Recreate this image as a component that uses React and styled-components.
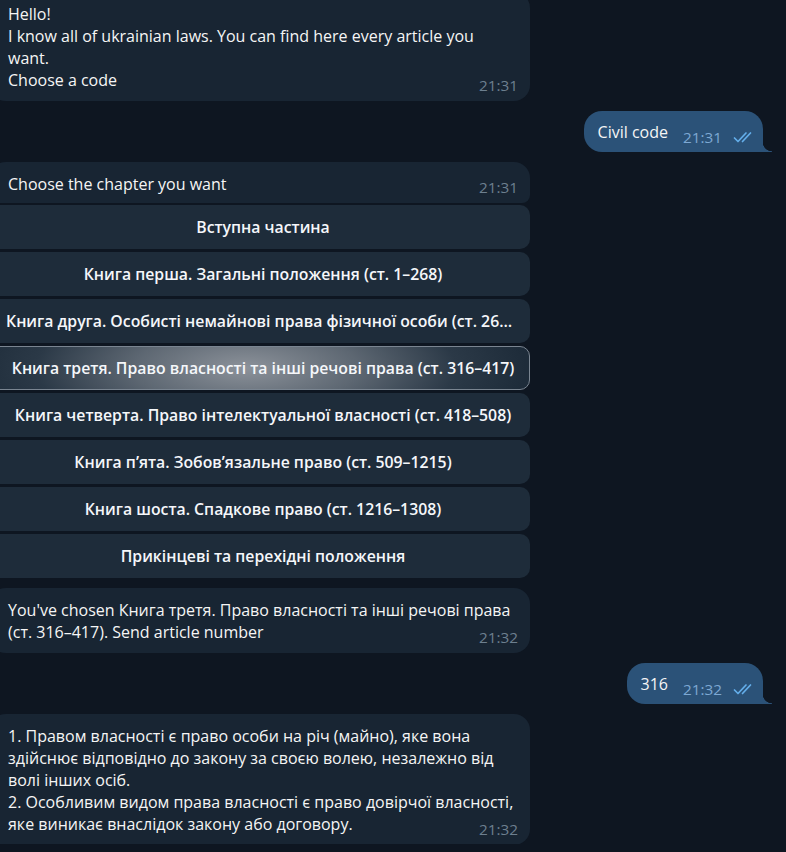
import React from "react";
import styled, { createGlobalStyle, css } from "styled-components";

const GlobalStyle = createGlobalStyle`
  html, body {
    margin: 0;
    padding: 0;
    background: #0e1621;
    overflow: hidden;
  }
  body {
    font-family: "Open Sans", "Noto Sans", sans-serif;
    -webkit-font-smoothing: antialiased;
  }
`;

const Chat = styled.div`
  width: 786px;
  height: 852px;
  display: flex;
  flex-direction: column;
  gap: 10px;
  margin-top: -8px;
  box-sizing: border-box;
`;

const InRow = styled.div`
  display: flex;
  flex-direction: column;
  width: 540px;
  margin-left: -10px;
`;

const OutRow = styled.div`
  display: flex;
  justify-content: flex-end;
  padding-right: 23px;
`;

const Bubble = styled.div`
  position: relative;
  box-sizing: border-box;
  padding: 11px 12px ${(p) => (p.$tight ? "8px" : "10px")} 18px;
  background: #182533;
  border-radius: ${(p) => (p.$tight ? "16px 16px 8px 8px" : "16px")};
  color: #f5f5f5;
  font-size: 16px;
  line-height: 22px;
  white-space: nowrap;
`;

const Time = styled.span`
  position: absolute;
  right: 12px;
  bottom: 6px;
  font-size: 15.3px;
  line-height: 20px;
  color: #6d7f8f;
`;

const Keyboard = styled.div`
  display: flex;
  flex-direction: column;
  gap: 3px;
  margin-top: 2px;
`;

const KeyButton = styled.div`
  box-sizing: border-box;
  height: 44px;
  padding: 0 10px 0 16px;
  border-radius: 10px;
  background: #1e2c3a;
  color: #f5f7fa;
  font-size: 15.8px;
  font-weight: 600;
  line-height: 44px;
  text-align: center;
  white-space: nowrap;
  overflow: hidden;
  text-overflow: ellipsis;
  ${(p) =>
    p.$active &&
    css`
      line-height: 42px;
      border: 1px solid #7a8591;
      background: radial-gradient(
        ellipse 280px 95px at 255px 50%,
        #8c929a 0%,
        #5d6772 40%,
        #2b3947 75%,
        #1e2c3a 100%
      );
    `}
`;

const OutBubble = styled.div`
  position: relative;
  display: flex;
  align-items: flex-end;
  padding: 9.5px 8px 4.5px 14px;
  background: #2b5278;
  border-radius: 18px 18px 0 18px;
  color: #f5f5f5;
  font-size: 16px;
  line-height: 22px;

  &::after {
    content: "";
    position: absolute;
    right: -9px;
    bottom: 0;
    width: 9px;
    height: 10px;
    background: radial-gradient(circle at 100% 0, transparent 9px, #2b5278 9.6px);
  }
`;

const OutText = styled.span`
  margin-bottom: 5px;
`;

const Meta = styled.span`
  display: flex;
  align-items: center;
  margin-left: 15px;
  font-size: 15.3px;
  line-height: 22px;
  color: #7da8d3;
`;

const Checks = styled.svg`
  margin-left: 11px;
  width: 22px;
  height: 12px;
`;

const DoubleCheck = () => (
  <Checks viewBox="0 0 22 12" fill="none" stroke="#64aeea" strokeWidth="1.7" strokeLinecap="round" strokeLinejoin="round">
    <path d="M1.5 7 L5 10.5 L13 2" />
    <path d="M9.5 10.5 L17.5 2" />
  </Checks>
);

const Outgoing = ({ text, time }) => (
  <OutRow>
    <OutBubble>
      <OutText>{text}</OutText>
      <Meta>
        {time}
        <DoubleCheck />
      </Meta>
    </OutBubble>
  </OutRow>
);

const chapters = [
  "Вступна частина",
  "Книга перша. Загальні положення (ст. 1–268)",
  "Книга друга. Особисті немайнові права фізичної особи (ст. 269–315)",
  "Книга третя. Право власності та інші речові права (ст. 316–417)",
  "Книга четверта. Право інтелектуальної власності (ст. 418–508)",
  "Книга п’ята. Зобов’язальне право (ст. 509–1215)",
  "Книга шоста. Спадкове право (ст. 1216–1308)",
  "Прикінцеві та перехідні положення",
];

export default function App() {
  return (
    <>
      <GlobalStyle />
      <Chat>
        <InRow>
          <Bubble>
            Hello!
            <br />
            I know all of ukrainian laws. You can find here every article you
            <br />
            want.
            <br />
            Choose a code
            <Time>21:31</Time>
          </Bubble>
        </InRow>

        <Outgoing text="Civil code" time="21:31" />

        <InRow>
          <Bubble $tight>
            Choose the chapter you want
            <Time>21:31</Time>
          </Bubble>
          <Keyboard>
            {chapters.map((c, i) => (
              <KeyButton key={c} $active={i === 3}>
                {c}
              </KeyButton>
            ))}
          </Keyboard>
        </InRow>

        <InRow>
          <Bubble>
            You've chosen Книга третя. Право власності та інші речові права
            <br />
            (ст. 316–417). Send article number
            <Time>21:32</Time>
          </Bubble>
        </InRow>

        <Outgoing text="316" time="21:32" />

        <InRow>
          <Bubble>
            1. Правом власності є право особи на річ (майно), яке вона
            <br />
            здійснює відповідно до закону за своєю волею, незалежно від
            <br />
            волі інших осіб.
            <br />
            2. Особливим видом права власності є право довірчої власності,
            <br />
            яке виникає внаслідок закону або договору.
            <Time>21:32</Time>
          </Bubble>
        </InRow>
      </Chat>
    </>
  );
}
